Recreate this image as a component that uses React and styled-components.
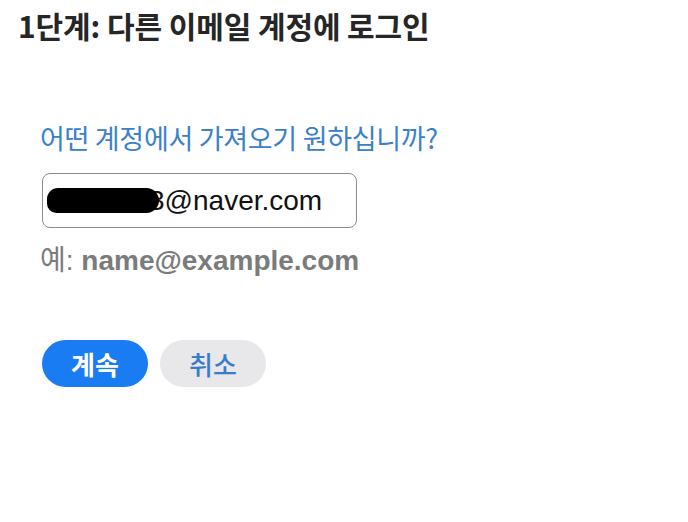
import React from 'react';
import styled, { createGlobalStyle } from 'styled-components';

const Global = createGlobalStyle`
    html, body {
        margin: 0;
        padding: 0;
        background: #fff;
    }
    body {
        font-family: 'Noto Sans CJK KR', 'Noto Sans', sans-serif;
    }
`;

const Page = styled.div`
    width: 688px;
    height: 522px;
    box-sizing: border-box;
    padding: 4px 0 0 18px;
`;

const Title = styled.h1`
    margin: 0;
    font-size: 30px;
    font-weight: 700;
    color: #262626;
    letter-spacing: -0.1px;
    line-height: 42px;
`;

const Form = styled.div`
    display: flex;
    flex-direction: column;
    align-items: flex-start;
    padding: 74px 0 0 22px;
`;

const Question = styled.p`
    margin: 0;
    font-size: 27px;
    font-weight: 400;
    color: #3a80cc;
    line-height: 36px;
    letter-spacing: -0.3px;
`;

const Field = styled.div`
    margin-top: 17px;
    margin-left: 2px;
    width: 315px;
    height: 55px;
    box-sizing: border-box;
    border: 1.5px solid #8c8c8c;
    border-radius: 8px;
    display: flex;
    align-items: center;
    padding-left: 4px;
    font-family: 'Liberation Sans', Arial, sans-serif;
    font-size: 28px;
    color: #111;
`;

const Redact = styled.span`
    display: inline-block;
    width: 112px;
    height: 25px;
    background: #000;
    border-radius: 14px 16px 16px 12px;
    position: relative;
    z-index: 1;
    margin-right: -10px;
`;

const Hint = styled.p`
    margin: 17px 0 0;
    font-family: 'Liberation Sans', 'Noto Sans CJK KR', sans-serif;
    font-size: 28px;
    color: #7b7b7b;
    line-height: 32px;
    b {
        font-family: 'Liberation Sans', Arial, sans-serif;
        font-weight: 700;
    }
`;

const Actions = styled.div`
    display: flex;
    gap: 12px;
    margin-top: 63px;
    margin-left: 2px;
`;

const Button = styled.button`
    width: 106px;
    height: 47px;
    border: none;
    border-radius: 24px;
    font-family: 'Noto Sans CJK KR', sans-serif;
    font-size: 26px;
    font-weight: ${p => (p.$primary ? 700 : 500)};
    background: ${p => (p.$primary ? '#1a7cf2' : '#e8e8ea')};
    color: ${p => (p.$primary ? '#fff' : '#3a7ccc')};
    padding: 0;
    cursor: pointer;
`;

export default function App() {
    return (
        <>
            <Global />
            <Page>
                <Title>1단계: 다른 이메일 계정에 로그인</Title>
                <Form>
                    <Question>어떤 계정에서 가져오기 원하십니까?</Question>
                    <Field>
                        <Redact />
                        3@naver.com
                    </Field>
                    <Hint>
                        예: <b>name@example.com</b>
                    </Hint>
                    <Actions>
                        <Button $primary>계속</Button>
                        <Button>취소</Button>
                    </Actions>
                </Form>
            </Page>
        </>
    );
}
